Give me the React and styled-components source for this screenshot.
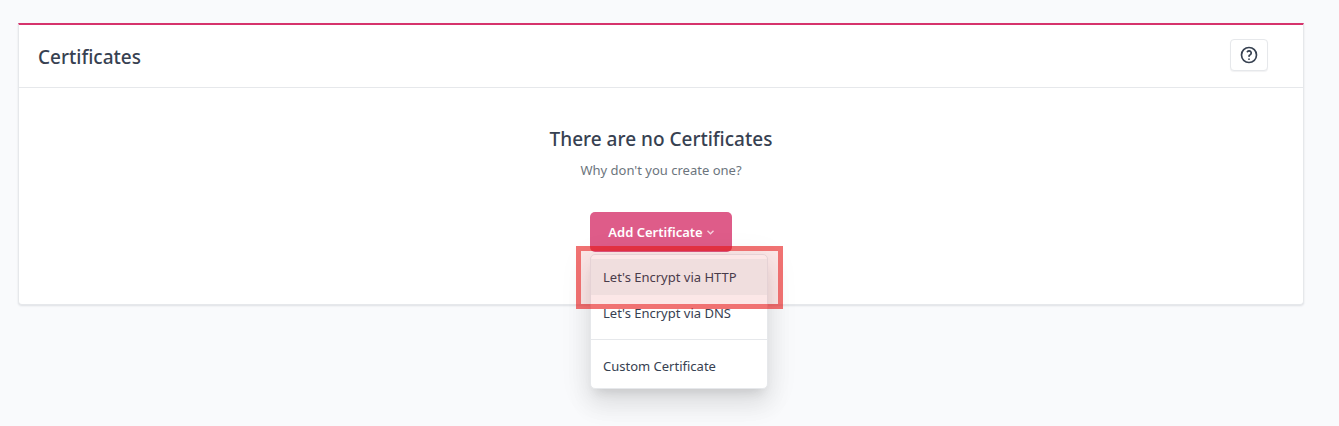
import React from 'react'
import styled, { createGlobalStyle } from 'styled-components'

const GlobalStyle = createGlobalStyle`
*{
  box-sizing: border-box;
}
body{
  margin: 0;
  background-color: #f9fafc;
  color: #374151;
  font-family: "Noto Sans", "Open Sans", sans-serif;
  font-size: 13px;
  line-height: 20px;
}
h2, h3, p, ul{
  margin: 0;
  padding: 0;
}
button{
  font-family: inherit;
  cursor: pointer;
}
`;

const Page = styled.main`
  padding: 23px 35px 120px 18px;
`;

const Card = styled.section`
  background-color: #fff;
  border: 1px solid #e6e8eb;
  border-top: 2px solid #d6336c;
  border-radius: 0 0 4px 4px;
  box-shadow: 0 1px 2px rgba(30, 41, 59, 0.12);
`;

const CardHeader = styled.header`
  display: flex;
  align-items: flex-end;
  justify-content: space-between;
  padding: 14px 35px 16px 19px;
  border-bottom: 1px solid #e6e8eb;
`;

const Title = styled.h2`
  font-size: 19px;
  line-height: 28px;
  font-weight: 500;
`;

const HelpButton = styled.button`
  display: flex;
  align-items: center;
  justify-content: center;
  width: 38px;
  height: 32px;
  padding: 0;
  color: #374151;
  background-color: #fff;
  border: 1px solid #e6e8eb;
  border-radius: 4px;
  box-shadow: 0 1px 1px rgba(30, 41, 59, 0.06);
`;

const Empty = styled.div`
  display: flex;
  flex-direction: column;
  align-items: center;
  padding: 37px 16px 52px;
`;

const EmptyTitle = styled.h3`
  font-size: 19px;
  line-height: 28px;
  font-weight: 500;
`;

const EmptyText = styled.p`
  margin: 7px 0 32px;
  color: #6c757d;
`;

const Dropdown = styled.div`
  position: relative;
`;

const AddButton = styled.button`
  display: flex;
  align-items: center;
  justify-content: center;
  gap: 4px;
  width: 142px;
  height: 40px;
  padding: 0;
  color: #fff;
  font-size: 13px;
  font-weight: 600;
  background-color: #de5c89;
  border: 0;
  border-radius: 5px;
`;

const Menu = styled.ul`
  position: absolute;
  top: 42px;
  left: 0;
  width: 178px;
  padding: 4px 0;
  list-style: none;
  background-color: #fff;
  border: 1px solid #e6e8eb;
  border-radius: 5px;
  box-shadow: 0 16px 24px 2px rgba(0, 0, 0, 0.07), 0 6px 30px 5px rgba(0, 0, 0, 0.06), 0 8px 10px -5px rgba(0, 0, 0, 0.1);
`;

const MenuItem = styled.button`
  display: block;
  width: 100%;
  height: 36px;
  padding: 0 12px;
  color: #374151;
  font-size: 13px;
  text-align: left;
  background-color: ${props => props.$active ? '#f2f5f5' : 'transparent'};
  border: 0;
`;

const Divider = styled.li`
  height: 1px;
  margin: 8px 0;
  background-color: #e6e8eb;
`;

const Highlight = styled.div`
  position: absolute;
  top: 34px;
  left: -14px;
  width: 207px;
  height: 63px;
  background-color: rgba(230, 20, 20, 0.1);
  background-clip: padding-box;
  border: 5px solid rgba(230, 20, 20, 0.6);
  pointer-events: none;
`;

const HelpIcon = () => (
  <svg width="20" height="20" viewBox="0 0 24 24" fill="none" stroke="currentColor" strokeWidth="2" strokeLinecap="round" strokeLinejoin="round" aria-hidden="true">
    <circle cx="12" cy="12" r="9" />
    <path d="M12 17v.01" />
    <path d="M12 13.5a1.5 1.5 0 0 1 1 -1.5a2.6 2.6 0 1 0 -3 -4" />
  </svg>
)

const Chevron = () => (
  <svg width="7" height="5" viewBox="0 0 7 5" fill="none" stroke="currentColor" strokeWidth="1.4" opacity="0.7" aria-hidden="true">
    <path d="M0.5 0.7L3.5 3.8L6.5 0.7" />
  </svg>
)

const App = () => {
  return (
    <>
      <GlobalStyle />
      <Page>
        <Card>
          <CardHeader>
            <Title>Certificates</Title>
            <HelpButton type="button" aria-label="Help">
              <HelpIcon />
            </HelpButton>
          </CardHeader>
          <Empty>
            <EmptyTitle>There are no Certificates</EmptyTitle>
            <EmptyText>Why don't you create one?</EmptyText>
            <Dropdown>
              <AddButton type="button" aria-haspopup="true" aria-expanded="true">
                Add Certificate
                <Chevron />
              </AddButton>
              <Menu>
                <li><MenuItem type="button" $active>Let's Encrypt via HTTP</MenuItem></li>
                <li><MenuItem type="button">Let's Encrypt via DNS</MenuItem></li>
                <Divider role="separator" />
                <li><MenuItem type="button">Custom Certificate</MenuItem></li>
              </Menu>
              <Highlight />
            </Dropdown>
          </Empty>
        </Card>
      </Page>
    </>
  )
}

export default App
